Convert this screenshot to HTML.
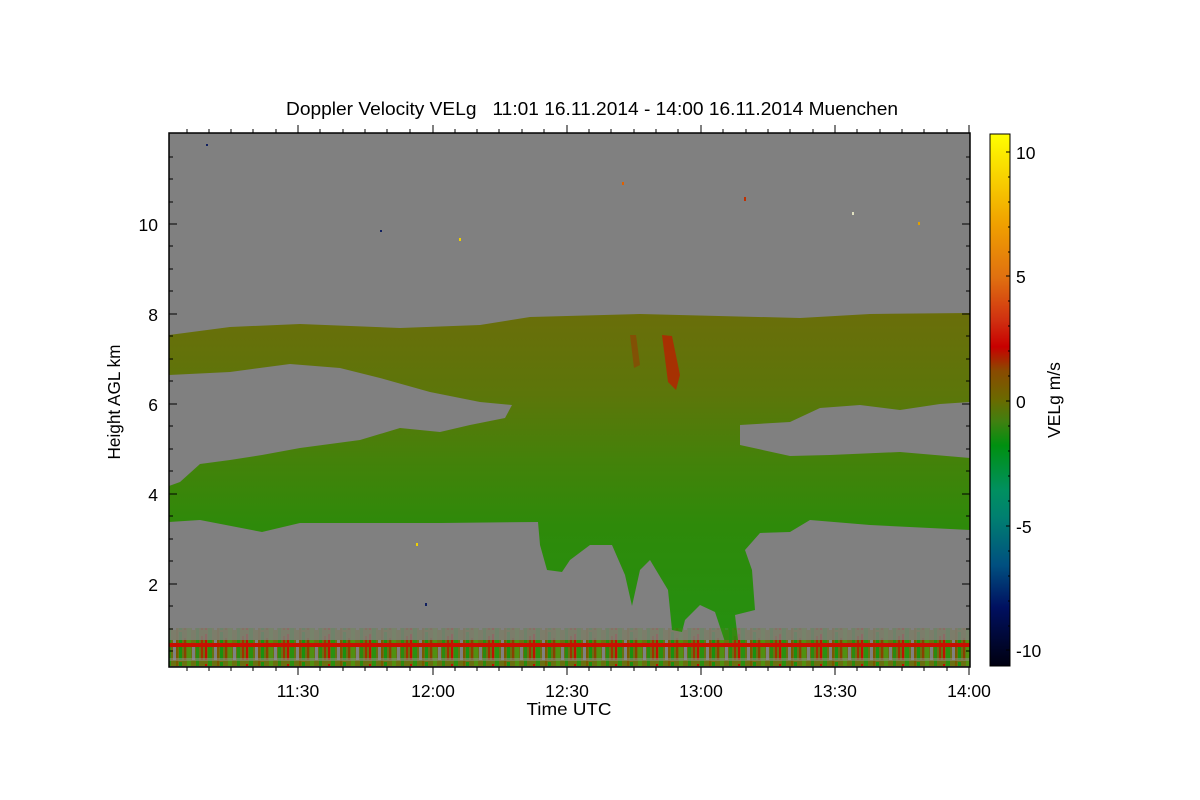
<!DOCTYPE html>
<html><head><meta charset="utf-8"><style>
html,body{margin:0;padding:0;background:#fff;}
svg{display:block;font-family:"Liberation Sans",sans-serif;}
</style></head><body>
<svg width="1200" height="800" viewBox="0 0 1200 800" xmlns="http://www.w3.org/2000/svg">
<defs>
<linearGradient id="cb" x1="0" y1="0" x2="0" y2="1">
<stop offset="0" stop-color="#ffff00"/>
<stop offset="0.17" stop-color="#f0a000"/>
<stop offset="0.27" stop-color="#e07010"/>
<stop offset="0.35" stop-color="#d03010"/>
<stop offset="0.40" stop-color="#c80000"/>
<stop offset="0.445" stop-color="#8a4a00"/>
<stop offset="0.50" stop-color="#6a6a00"/>
<stop offset="0.54" stop-color="#408010"/>
<stop offset="0.585" stop-color="#009010"/>
<stop offset="0.67" stop-color="#009060"/>
<stop offset="0.72" stop-color="#008070"/>
<stop offset="0.81" stop-color="#005080"/>
<stop offset="0.89" stop-color="#001060"/>
<stop offset="1" stop-color="#000010"/>
</linearGradient>
<linearGradient id="cl" gradientUnits="userSpaceOnUse" x1="0" y1="313" x2="0" y2="640">
<stop offset="0" stop-color="#6a6e0a"/>
<stop offset="0.25" stop-color="#5c760a"/>
<stop offset="0.45" stop-color="#44820a"/>
<stop offset="0.65" stop-color="#2e8a0a"/>
<stop offset="1" stop-color="#259010"/>
</linearGradient>
<pattern id="nz" width="41" height="30" patternUnits="userSpaceOnUse">
<rect width="41" height="30" fill="#6a7010"/>
<rect x="0" y="4" width="2" height="26" fill="#c01000"/>
<rect x="3" width="4" height="30" fill="#2a9010"/>
<rect x="9" y="10" width="3" height="20" fill="#808080"/>
<rect x="12" width="2" height="30" fill="#7a5800"/>
<rect x="15" y="2" width="3" height="28" fill="#1a9010"/>
<rect x="20" y="8" width="2" height="22" fill="#8a4000"/>
<rect x="23" width="4" height="30" fill="#509010"/>
<rect x="28" y="14" width="3" height="16" fill="#808080"/>
<rect x="32" width="3" height="30" fill="#2a8a10"/>
<rect x="37" y="6" width="2" height="24" fill="#a03000"/>
</pattern>
</defs>
<rect x="169" y="133" width="801" height="534" fill="#808080"/>
<polygon points="169,335 230,327 300,324 400,328 480,325 530,317 640,314 800,318 870,314 970,313 970,530 930,528 870,525 810,520 790,532 760,533 745,550 752,570 755,610 735,615 738,640 725,642 715,612 700,605 685,620 682,632 672,630 668,590 650,560 640,570 632,606 625,575 612,545 590,545 570,560 562,572 547,570 540,545 538,522 440,523 300,523 262,532 200,520 169,522" fill="url(#cl)"/>
<polygon points="662,335 672,336 680,375 676,390 668,382" fill="#b82000" opacity="0.8"/>
<polygon points="630,335 636,335 640,365 634,368" fill="#a03000" opacity="0.5"/>
<polygon fill="#808080" points="169,375 230,372 290,364 340,368 380,378 430,392 480,402 512,405 505,418 470,425 440,432 400,428 360,440 300,448 262,455 230,460 200,464 180,482 169,486"/>
<polygon fill="#808080" points="740,425 790,422 820,408 860,405 900,410 940,404 970,402 970,458 900,452 830,455 790,456 740,445"/>
<rect x="169" y="628" width="801" height="12" fill="url(#nz)" opacity="0.2"/>
<rect x="169" y="640" width="801" height="26" fill="url(#nz)"/>
<rect x="169" y="643" width="801" height="4" fill="#c81000"/>
<rect x="169" y="658" width="801" height="3" fill="#909090" opacity="0.5"/>
<g>
<rect x="206" y="144" width="2" height="2" fill="#102060"/>
<rect x="744" y="197" width="2" height="4" fill="#c03000"/>
<rect x="459" y="238" width="2" height="3" fill="#f0d000"/>
<rect x="380" y="230" width="2" height="2" fill="#102060"/>
<rect x="852" y="212" width="2" height="3" fill="#e0e0c0"/>
<rect x="918" y="222" width="2" height="3" fill="#e0a000"/>
<rect x="416" y="543" width="2" height="3" fill="#f0d000"/>
<rect x="425" y="603" width="2" height="3" fill="#102060"/>
<rect x="622" y="182" width="2" height="3" fill="#e06000"/>
</g>
<rect x="169" y="133" width="801" height="534" fill="none" stroke="#000" stroke-width="1.5"/>
<g stroke="#000" stroke-width="1">
<path d="M298,667v8M433,667v8M567,667v8M701,667v8M835,667v8M969,667v8"/>
<path d="M298,133v-8M433,133v-8M567,133v-8M701,133v-8M835,133v-8M969,133v-8"/>
<path d="M187,667v4M209,667v4M231,667v4M253,667v4M276,667v4M320,667v4M343,667v4M365,667v4M387,667v4M410,667v4M455,667v4M477,667v4M499,667v4M522,667v4M544,667v4M589,667v4M611,667v4M634,667v4M656,667v4M678,667v4M723,667v4M746,667v4M768,667v4M790,667v4M813,667v4M857,667v4M880,667v4M902,667v4M924,667v4M947,667v4"/>
<path d="M187,133v-4M209,133v-4M231,133v-4M253,133v-4M276,133v-4M320,133v-4M343,133v-4M365,133v-4M387,133v-4M410,133v-4M455,133v-4M477,133v-4M499,133v-4M522,133v-4M544,133v-4M589,133v-4M611,133v-4M634,133v-4M656,133v-4M678,133v-4M723,133v-4M746,133v-4M768,133v-4M790,133v-4M813,133v-4M857,133v-4M880,133v-4M902,133v-4M924,133v-4M947,133v-4"/>
<path d="M169,224h8M169,314h8M169,404h8M169,494h8M169,584h8"/>
<path d="M970,224h-8M970,314h-8M970,404h-8M970,494h-8M970,584h-8"/>
<path d="M169,157h4M169,179h4M169,202h4M169,246h4M169,269h4M169,291h4M169,336h4M169,359h4M169,381h4M169,426h4M169,449h4M169,471h4M169,516h4M169,539h4M169,561h4M169,606h4M169,629h4M169,651h4"/>
<path d="M970,157h-4M970,179h-4M970,202h-4M970,246h-4M970,269h-4M970,291h-4M970,336h-4M970,359h-4M970,381h-4M970,426h-4M970,449h-4M970,471h-4M970,516h-4M970,539h-4M970,561h-4M970,606h-4M970,629h-4M970,651h-4"/>
</g>
<rect x="990" y="134" width="20" height="532" fill="url(#cb)" stroke="#000" stroke-width="1"/>
<g stroke="#000" stroke-width="1">
<path d="M1010,152h-4M1010,276h-4M1010,401h-4M1010,526h-4M1010,650h-4"/>
<path d="M1010,177h-2M1010,202h-2M1010,227h-2M1010,252h-2M1010,301h-2M1010,326h-2M1010,351h-2M1010,376h-2M1010,426h-2M1010,451h-2M1010,476h-2M1010,501h-2M1010,551h-2M1010,576h-2M1010,601h-2M1010,626h-2"/>
</g>
<g font-size="17.5" fill="#000">
<text x="592" y="115" text-anchor="middle" font-size="18.5" textLength="612" lengthAdjust="spacingAndGlyphs">Doppler Velocity VELg&#160;&#160;&#160;11:01 16.11.2014 - 14:00 16.11.2014 Muenchen</text>
<text x="298" y="697" text-anchor="middle">11:30</text>
<text x="433" y="697" text-anchor="middle">12:00</text>
<text x="567" y="697" text-anchor="middle">12:30</text>
<text x="701" y="697" text-anchor="middle">13:00</text>
<text x="835" y="697" text-anchor="middle">13:30</text>
<text x="969" y="697" text-anchor="middle">14:00</text>
<text x="569" y="715" text-anchor="middle" textLength="85" lengthAdjust="spacingAndGlyphs">Time UTC</text>
<text x="158" y="231" text-anchor="end">10</text>
<text x="158" y="321" text-anchor="end">8</text>
<text x="158" y="411" text-anchor="end">6</text>
<text x="158" y="501" text-anchor="end">4</text>
<text x="158" y="591" text-anchor="end">2</text>
<text transform="translate(120,402) rotate(-90)" text-anchor="middle" textLength="115" lengthAdjust="spacingAndGlyphs">Height AGL km</text>
<text x="1016" y="159">10</text>
<text x="1016" y="283">5</text>
<text x="1016" y="408">0</text>
<text x="1016" y="533">-5</text>
<text x="1016" y="657">-10</text>
<text transform="translate(1060,400) rotate(-90)" text-anchor="middle">VELg m/s</text>
</g>
</svg>
</body></html>
